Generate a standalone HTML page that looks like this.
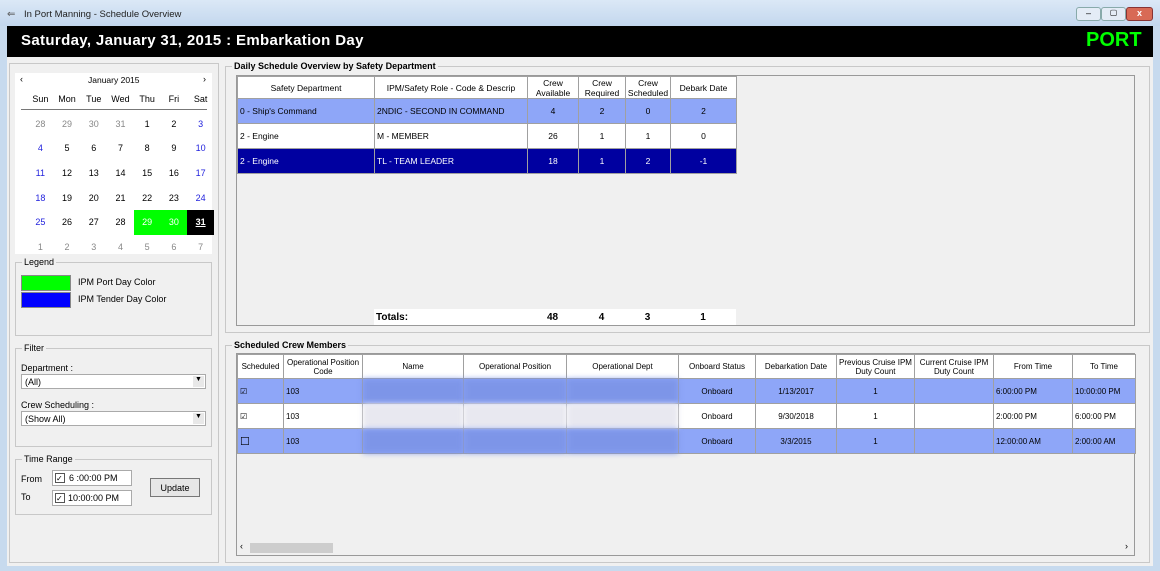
<!DOCTYPE html>
<html><head><style>
*{box-sizing:border-box;margin:0;padding:0}
body{width:1160px;height:571px;overflow:hidden;background:#c7daee;font-family:"Liberation Sans",sans-serif;font-size:9px;color:#000;position:relative}
.a{position:absolute}
.grp{position:absolute;border:1px solid #c8c8c8;}
.grp>.t{position:absolute;top:-6px;left:6px;background:#f0f0f0;padding:0 2px;font-size:9px}
table{border-collapse:collapse;position:absolute;font-size:8.5px;table-layout:fixed}
td{border:1px solid #a0a0a0;text-align:center;overflow:hidden;white-space:nowrap}
.l{text-align:left;padding-left:2px}
.s{background:#8ea6f8}.d{background:#0000a0;color:#fff}.w{background:#fff}
.cal td{border:none;height:24.6px;font-size:9px}
.g{color:#888}.b{color:#2222dd}
.blur{filter:blur(3px);background:#7d95e8}
</style></head><body>
<div class="a" style="left:0;top:0;width:1160px;height:26px;background:linear-gradient(#dbe8f6,#c3d7ee)"></div>
<div class="a" style="left:24px;top:9px;font-size:9.5px;color:#222">In Port Manning - Schedule Overview</div>
<div class="a" style="left:7px;top:9px;font-size:10px;color:#555">⇐</div>
<div class="a" style="left:1076px;top:7px;width:25px;height:14px;border:1px solid #8aa;border-radius:3px;background:#e4ecf6;text-align:center;font-size:9px">–</div>
<div class="a" style="left:1101px;top:7px;width:25px;height:14px;border:1px solid #8aa;border-radius:3px;background:#e4ecf6;text-align:center;font-size:8px">▢</div>
<div class="a" style="left:1126px;top:7px;width:27px;height:14px;border:1px solid #833;border-radius:3px;background:#d86a55;color:#fff;text-align:center;font-size:9px;font-weight:bold">x</div>
<div class="a" style="left:7px;top:26px;width:1146px;height:540px;background:#f0f0f0"></div>
<div class="a" style="left:7px;top:26px;width:1146px;height:31px;background:#000"></div>
<div class="a" style="left:21px;top:32px;color:#fff;font-weight:bold;font-size:15px;letter-spacing:0.35px">Saturday, January 31, 2015 : Embarkation Day</div>
<div class="a" style="left:1086px;top:29px;color:#00ff00;font-weight:bold;font-size:20px">PORT</div>
<div class="a" style="left:9px;top:63px;width:210px;height:500px;border:1px solid #c8c8c8"></div>
<div class="a" style="left:15px;top:73px;width:197px;height:181px;background:#fff"></div>
<div class="a" style="left:20px;top:74px;font-size:9px">‹</div><div class="a" style="left:203px;top:74px;font-size:9px">›</div>
<div class="a" style="left:88px;top:75px;font-size:8.5px">January 2015</div>
<div class="a" style="left:21px;top:109px;width:186px;height:1px;background:#777"></div>
<table class="cal" style="left:27px;top:87px;width:187px">
<tr style="height:22px"><td>Sun</td><td>Mon</td><td>Tue</td><td>Wed</td><td>Thu</td><td>Fri</td><td>Sat</td></tr>
<tr><td class="g">28</td><td class="g">29</td><td class="g">30</td><td class="g">31</td><td>1</td><td>2</td><td class="b">3</td></tr>
<tr><td class="b">4</td><td>5</td><td>6</td><td>7</td><td>8</td><td>9</td><td class="b">10</td></tr>
<tr><td class="b">11</td><td>12</td><td>13</td><td>14</td><td>15</td><td>16</td><td class="b">17</td></tr>
<tr><td class="b">18</td><td>19</td><td>20</td><td>21</td><td>22</td><td>23</td><td class="b">24</td></tr>
<tr><td class="b">25</td><td>26</td><td>27</td><td>28</td><td style="background:#00ff00;color:#fff">29</td><td style="background:#00ff00;color:#fff">30</td><td style="background:#000;color:#fff;text-decoration:underline;font-weight:bold">31</td></tr>
<tr><td class="g">1</td><td class="g">2</td><td class="g">3</td><td class="g">4</td><td class="g">5</td><td class="g">6</td><td class="g">7</td></tr>
</table>
<div class="grp" style="left:15px;top:262px;width:197px;height:74px"><span class="t">Legend</span></div>
<div class="a" style="left:21px;top:275px;width:50px;height:16px;background:#00ff00;border:1px solid #888"></div>
<div class="a" style="left:21px;top:292px;width:50px;height:16px;background:#0000ff;border:1px solid #888"></div>
<div class="a" style="left:78px;top:277px">IPM Port Day Color</div>
<div class="a" style="left:78px;top:294px">IPM Tender Day Color</div>
<div class="grp" style="left:15px;top:348px;width:197px;height:99px"><span class="t">Filter</span></div>
<div class="a" style="left:21px;top:363px">Department :</div>
<div class="a" style="left:21px;top:374px;width:185px;height:15px;background:#fff;border:1px solid #aaa;padding:2px 3px">(All)<span style="position:absolute;right:1px;top:1px;width:11px;height:11px;background:#e8e8e8;font-size:7px;text-align:center">▼</span></div>
<div class="a" style="left:21px;top:400px">Crew Scheduling :</div>
<div class="a" style="left:21px;top:411px;width:185px;height:15px;background:#fff;border:1px solid #aaa;padding:2px 3px">(Show All)<span style="position:absolute;right:1px;top:1px;width:11px;height:11px;background:#e8e8e8;font-size:7px;text-align:center">▼</span></div>
<div class="grp" style="left:15px;top:459px;width:197px;height:56px"><span class="t">Time Range</span></div>
<div class="a" style="left:21px;top:474px">From</div><div class="a" style="left:21px;top:492px">To</div>
<div class="a" style="left:52px;top:470px;width:80px;height:16px;background:#fff;border:1px solid #aaa;padding:2px 0 0 16px">6 :00:00 PM<span style="position:absolute;left:2px;top:2px;width:10px;height:10px;border:1px solid #555;font-size:8px;line-height:9px">✓</span></div>
<div class="a" style="left:52px;top:490px;width:80px;height:16px;background:#fff;border:1px solid #aaa;padding:2px 0 0 15px">10:00:00 PM<span style="position:absolute;left:2px;top:2px;width:10px;height:10px;border:1px solid #555;font-size:8px;line-height:9px">✓</span></div>
<div class="a" style="left:150px;top:478px;width:50px;height:19px;border:1px solid #777;background:#e6e6e6;text-align:center;padding-top:4px">Update</div>
<div class="grp" style="left:225px;top:66px;width:925px;height:267px"><span class="t" style="font-weight:bold">Daily Schedule Overview by Safety Department</span></div>
<div class="a" style="left:236px;top:75px;width:899px;height:251px;border:1px solid #999;background:#f0f0f0"></div>
<table style="left:237px;top:76px;width:499px">
<colgroup><col style="width:137px"><col style="width:153px"><col style="width:51px"><col style="width:47px"><col style="width:45px"><col style="width:66px"></colgroup>
<tr class="w" style="height:22px"><td>Safety Department</td><td>IPM/Safety Role - Code &amp; Descrip</td><td>Crew<br>Available</td><td>Crew<br>Required</td><td>Crew<br>Scheduled</td><td>Debark Date</td></tr>
<tr class="s" style="height:25px"><td class="l">0 - Ship's Command</td><td class="l">2NDIC - SECOND IN COMMAND</td><td>4</td><td>2</td><td>0</td><td>2</td></tr>
<tr class="w" style="height:25px"><td class="l">2 - Engine</td><td class="l">M - MEMBER</td><td>26</td><td>1</td><td>1</td><td>0</td></tr>
<tr class="d" style="height:25px"><td class="l">2 - Engine</td><td class="l">TL - TEAM LEADER</td><td>18</td><td>1</td><td>2</td><td>-1</td></tr>
</table>
<table style="left:374px;top:309px;width:362px;font-weight:bold;font-size:10px">
<colgroup><col style="width:153px"><col style="width:51px"><col style="width:47px"><col style="width:45px"><col style="width:66px"></colgroup>
<tr class="w" style="height:16px"><td class="l" style="border:none">Totals:</td><td style="border:none">48</td><td style="border:none">4</td><td style="border:none">3</td><td style="border:none">1</td></tr></table>
<div class="grp" style="left:225px;top:345px;width:925px;height:218px"><span class="t" style="font-weight:bold">Scheduled Crew Members</span></div>
<div class="a" style="left:236px;top:353px;width:899px;height:203px;border:1px solid #999;background:#f0f0f0"></div>
<table style="left:237px;top:354px;width:898px;font-size:8px">
<colgroup><col style="width:46px"><col style="width:79px"><col style="width:101px"><col style="width:103px"><col style="width:112px"><col style="width:77px"><col style="width:81px"><col style="width:78px"><col style="width:79px"><col style="width:79px"><col style="width:63px"></colgroup>
<tr class="w" style="height:24px"><td>Scheduled</td><td>Operational Position<br>Code</td><td>Name</td><td>Operational Position</td><td>Operational Dept</td><td>Onboard Status</td><td>Debarkation Date</td><td>Previous Cruise IPM<br>Duty Count</td><td>Current Cruise IPM<br>Duty Count</td><td>From Time</td><td>To Time</td></tr>
<tr class="s" style="height:25px"><td class="l">☑</td><td class="l">103</td><td class="blur"></td><td class="blur"></td><td class="blur"></td><td>Onboard</td><td>1/13/2017</td><td>1</td><td></td><td class="l">6:00:00 PM</td><td class="l">10:00:00 PM</td></tr>
<tr class="w" style="height:25px"><td class="l">☑</td><td class="l">103</td><td class="blur" style="background:#e8e8f0"></td><td class="blur" style="background:#e8e8f0"></td><td class="blur" style="background:#e8e8f0"></td><td>Onboard</td><td>9/30/2018</td><td>1</td><td></td><td class="l">2:00:00 PM</td><td class="l">6:00:00 PM</td></tr>
<tr class="s" style="height:25px"><td class="l" style="font-size:11px">☐</td><td class="l">103</td><td class="blur"></td><td class="blur"></td><td class="blur"></td><td>Onboard</td><td>3/3/2015</td><td>1</td><td></td><td class="l">12:00:00 AM</td><td class="l">2:00:00 AM</td></tr>
</table>
<div class="a" style="left:237px;top:541px;width:897px;height:14px;background:#f0f0f0"></div>
<div class="a" style="left:250px;top:543px;width:83px;height:10px;background:#cdcdcd"></div>
<div class="a" style="left:240px;top:541px;font-size:9px">‹</div><div class="a" style="left:1125px;top:541px;font-size:9px">›</div>
</body></html>
